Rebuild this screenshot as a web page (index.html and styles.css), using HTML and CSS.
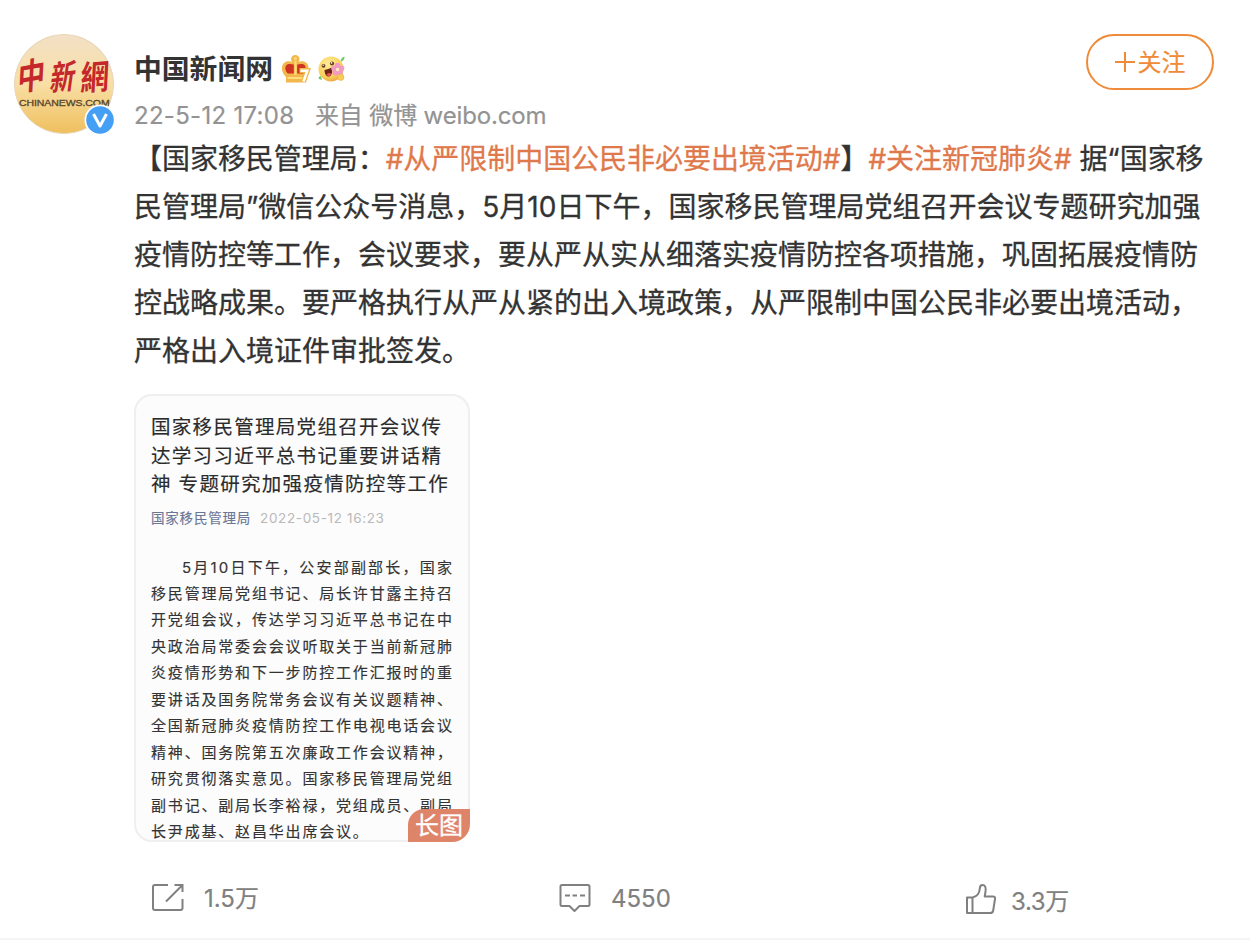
FILE: index.html
```html
<!DOCTYPE html>
<html lang="zh-CN">
<head>
<meta charset="utf-8">
<title>中国新闻网</title>
<link rel="stylesheet" href="styles.css">
</head>
<body>
<article class="post">
  <header class="head">
    <div class="avatar">
      <svg width="104" height="104" viewBox="0 0 104 104">
        <defs>
          <linearGradient id="gold" x1="0" y1="0" x2="0" y2="1"><stop offset="0" stop-color="#f3e0c6"/><stop offset=".5" stop-color="#f8dfa5"/><stop offset="1" stop-color="#f0bf5e"/></linearGradient>
          <clipPath id="disc"><circle cx="50" cy="50" r="50"/></clipPath>
        </defs>
        <circle cx="50" cy="50" r="49.5" fill="url(#gold)" stroke="#e6d6b8"/>
        <g clip-path="url(#disc)">
          <g class="logo-cn"><text transform="translate(3 57.500) skewY(-10) skewX(-3) scale(.86 1.120)" font-size="32">中</text><text transform="translate(35 57) skewY(-7) skewX(-8) scale(.78 1.050)" font-size="32">新</text><text transform="translate(66 56.500) skewY(-4) skewX(-3) scale(.86 1.030)" font-size="33">網</text></g>
          <text class="logo-en" transform="translate(5 71.500) scale(1.170 1)" x="0" y="0" textLength="77.500">CHINANEWS.COM</text>
        </g>
        <circle cx="86" cy="86" r="15.5" fill="#fff"/>
        <circle cx="86" cy="86" r="13.8" fill="#459ff5"/>
        <path d="M79.500 80 86 92 92.500 80" fill="none" stroke="#fff" stroke-width="3" stroke-linejoin="round"/>
      </svg>
    </div>
    <div class="who">
      <div class="name-row">
        <span class="name">中国新闻网</span>
        <svg class="crown" width="30" height="30" viewBox="0 0 30 30">
          <path d="M5 28.500V23C-.5 18.500-.5 9 5.500 7.600c2.500-.6 4.500-.2 6 .7A4.200 4.200 0 1 1 17 8.300c1.500-.9 3.500-1.300 6-.7C29 9 29 18.500 23.500 23v5.500Z" fill="#f2b84b"/>
          <path d="M12.800 10.500V19.500H6.800C3.300 16.500 3.500 10.500 7.500 10c2-.2 3.800 0 5.300.5ZM16.200 10.500V19.500h6c3.500-3 3.300-9-.7-9.500-2-.2-3.800 0-5.300.5Z" fill="#cf3322"/>
          <path d="M14.500 7v14M6.500 24h15" stroke="#ffdc7c" stroke-width="2"/><circle cx="14.300" cy="4.700" r="1.700" fill="#ffd771"/>
          <path d="M18.500 16.500h8L22.500 28" fill="none" stroke="#f2b84b" stroke-width="5"/>
          <path d="M19.500 16.800h6.800L22.500 27.500" fill="none" stroke="#fff" stroke-width="2.500"/>
        </svg>
        <svg class="smile" width="30" height="30" viewBox="0 0 30 30">
          <defs><radialGradient id="face" cx=".4" cy=".3" r=".75"><stop offset="0" stop-color="#ffec98"/><stop offset=".7" stop-color="#f9cf58"/><stop offset="1" stop-color="#e9a344"/></radialGradient></defs>
          <path d="M22.500 8C22.500 5 24 3.500 26.500 2.500 26.800 5 25.500 7 22.500 8ZM.5 23l2.500-1 1 4-3-1Z" fill="#70c96b"/>
          <circle cx="13" cy="15" r="12.500" fill="url(#face)"/>
          <circle cx="5.500" cy="11.800" r="1.900" fill="#6a3c24"/><circle cx="14" cy="9.500" r="2.100" fill="#6a3c24"/>
          <circle cx="5.200" cy="11.200" r=".7" fill="#fff"/><circle cx="13.500" cy="8.900" r=".8" fill="#fff"/>
          <path d="M6.500 16c2.500-.5 5-1.400 7.300-2.500 1 4.500 0 8.500-2.800 9-2.500.4-4.500-2.500-4.500-6.500Z" fill="#6c241b"/><path d="M8.500 20.500c1-1.500 3-2 4.500-1-.2 3-3 3.700-4.500 1Z" fill="#e95355"/>
          <g fill="#f29ac4"><circle cx="19.500" cy="11.500" r="2.800"/><circle cx="23.500" cy="14.200" r="2.800"/><circle cx="22" cy="18.700" r="2.800"/><circle cx="17.300" cy="18.800" r="2.800"/><circle cx="15.800" cy="14.300" r="2.600"/></g>
          <circle cx="19.600" cy="15.500" r="1.700" fill="#fff0c4"/>
          <circle cx="22.800" cy="23.300" r="3.200" fill="#f8cd55" stroke="#e7a546" stroke-width=".5"/>
        </svg>
      </div>
      <div class="meta"><span class="time">22-5-12 17:08</span><span class="source">来自 微博 weibo.com</span></div>
    </div>
    <button class="follow"><svg width="20" height="20" viewBox="0 0 20 20"><path d="M10 0v20M0 10h20" stroke="#ef8b38" stroke-width="2"/></svg><span>关注</span></button>
  </header>

  <div class="content">
    <div class="text">
      <p class="l1">【国家移民管理局：<a>#从严限制中国公民非必要出境活动#</a>】<a>#关注新冠肺炎#</a> 据“国家移</p>
      <p>民管理局”微信公众号消息，5月10日下午，国家移民管理局党组召开会议专题研究加强</p>
      <p>疫情防控等工作，会议要求，要从严从实从细落实疫情防控各项措施，巩固拓展疫情防</p>
      <p>控战略成果。要严格执行从严从紧的出入境政策，从严限制中国公民非必要出境活动，</p>
      <p>严格出入境证件审批签发。</p>
    </div>
    <div class="picture">
      <div class="doc">
        <div class="doc-title"><p>国家移民管理局党组召开会议传</p><p>达学习习近平总书记重要讲话精</p><p>神 专题研究加强疫情防控等工作</p></div>
        <div class="doc-meta"><span class="doc-author">国家移民管理局</span><span class="doc-date">2022-05-12 16:23</span></div>
        <div class="doc-body">
          <p class="first">5月10日下午，公安部副部长，国家</p>
          <p>移民管理局党组书记、局长许甘露主持召</p>
          <p>开党组会议，传达学习习近平总书记在中</p>
          <p>央政治局常委会会议听取关于当前新冠肺</p>
          <p>炎疫情形势和下一步防控工作汇报时的重</p>
          <p>要讲话及国务院常务会议有关议题精神、</p>
          <p>全国新冠肺炎疫情防控工作电视电话会议</p>
          <p>精神、国务院第五次廉政工作会议精神，</p>
          <p>研究贯彻落实意见。国家移民管理局党组</p>
          <p>副书记、副局长李裕禄，党组成员、副局</p>
          <p>长尹成基、赵昌华出席会议。</p>
        </div>
      </div>
      <span class="long-tag">长图</span>
    </div>
  </div>

  <footer class="actions">
    <div class="action share">
      <svg width="34" height="30" viewBox="0 0 34 30"><path d="M17 2H4Q2 2 2 4v21q0 2 2 2h25.500q2 0 2-2V16M15 18.500 30.500 3M23.500 2h8v7" fill="none" stroke="#808080" stroke-width="2"/></svg><span>1.5万</span>
    </div>
    <div class="action comment">
      <svg width="34" height="30" viewBox="0 0 34 30"><path d="M4 2h26q1.500 0 1.500 1.500v18q0 1.500-1.500 1.500h-8.500l-5 5-5-5H4q-1.500 0-1.500-1.500v-18Q2.500 2 4 2Z" fill="none" stroke="#808080" stroke-width="2" stroke-linejoin="round"/><path d="M7 12.500h5m2.500 0h4.500m3 0h5" stroke="#808080" stroke-width="2"/></svg><span>4550</span>
    </div>
    <div class="action like">
      <svg width="34" height="32" viewBox="0 0 34 32"><path d="M2 14.500h5.500c4.500-1 7-4 7.300-9C14.900 3.200 15.800 2 17.500 2c2.700 0 3.500 2.500 3.100 6l-.9 5.500H28q2.500 0 2 2.500L28.200 27.500q-.4 2.500-3 2.500H2ZM7.500 14.500V30" fill="none" stroke="#808080" stroke-width="2" stroke-linejoin="round"/></svg><span>3.3万</span>
    </div>
  </footer>
</article>
</body>
</html>
```
FILE: styles.css
```css
* { box-sizing: border-box; }
body { margin: 0; background: #fff; color: #333; font-family: Inter, "Noto Sans CJK SC", sans-serif; }
p { margin: 0; white-space: nowrap; }
.post { width: 1250px; height: 940px; padding-top: 34px; border-bottom: 2px solid #f5f5f5; display: flex; flex-direction: column; }
.head { height: 101px; padding: 0 36px 0 14px; display: flex; align-items: flex-start; flex: none; }
.avatar { width: 104px; height: 104px; margin-right: 16px; flex: none; }
.avatar svg { display: block; }
.logo-cn { font-family: "Noto Sans CJK SC", sans-serif; font-weight: 700; fill: #c5282b; }
.logo-en { font-family: "Liberation Sans", sans-serif; font-size: 9px; fill: #57452f; stroke: #57452f; stroke-width: .3px; }
.who { flex: 1; }
.name-row { height: 70px; display: flex; align-items: center; }
.name { font-size: 27.800px; font-weight: 700; width: 147px; line-height: 40px; white-space: nowrap; }
.crown { margin-right: 7px; }
.meta { margin-top: -7px; height: 38px; display: flex; align-items: center; font-size: 24px; line-height: 38px; color: #939393; white-space: nowrap; -webkit-text-stroke: .2px; }
.time { width: 181px; letter-spacing: .3px; }
.source { letter-spacing: -.15px; }
.follow { width: 128px; height: 56px; border: 2px solid #ef8b38; border-radius: 28px; background: #fff; color: #ef8b38; padding: 0; display: flex; align-items: center; justify-content: center; gap: 3px; font: 24px/52px "Noto Sans CJK SC", sans-serif; }
.follow span { margin-top: -3px; -webkit-text-stroke: .2px; }
.content { padding-left: 134px; }
.text { font-size: 28px; line-height: 48px; height: 240px; -webkit-text-stroke: .3px; }
.text a { color: #df794b; }
.l1 { letter-spacing: -.04px; }
.picture { position: relative; width: 336px; height: 448px; margin-top: 19px; }
.doc { height: 448px; padding: 17px 0 0 15px; border: 2px solid #efefef; border-radius: 18px; background: #fcfcfc; overflow: hidden; -webkit-text-stroke: .15px; }
.doc-title { font-size: 19.500px; line-height: 28.500px; letter-spacing: 1.300px; color: #2b2b2b; }
.doc-meta { height: 24px; margin-top: 7px; display: flex; align-items: center; line-height: 24px; white-space: nowrap; }
.doc-author { width: 109px; font-size: 13.500px; letter-spacing: .8px; color: #6a7696; }
.doc-date { font-size: 13.500px; letter-spacing: .65px; color: #b9b9b9; -webkit-text-stroke: 0; }
.doc-body { margin-top: 25px; font-size: 15px; line-height: 26.450px; letter-spacing: 1.820px; color: #333; }
.first { padding-left: 31px; letter-spacing: 2.200px; }
.long-tag { position: absolute; right: 0; bottom: 0; width: 62px; height: 33px; border-radius: 16px 0 18px 0; background: #de8469; color: #fff; font-size: 24px; line-height: 33px; text-align: center; -webkit-text-stroke: .3px; }
.actions { margin-top: 40px; padding-left: 151px; display: grid; grid-template-columns: 407px 407px 1fr; color: #808080; font-size: 24px; line-height: 34px; -webkit-text-stroke: .2px; }
.action { display: flex; align-items: center; gap: 19px; height: 34px; }
.share svg, .comment svg { margin-top: -2px; }
.like { gap: 12px; letter-spacing: -.4px; }
.like span { margin-top: 5px; }
```
